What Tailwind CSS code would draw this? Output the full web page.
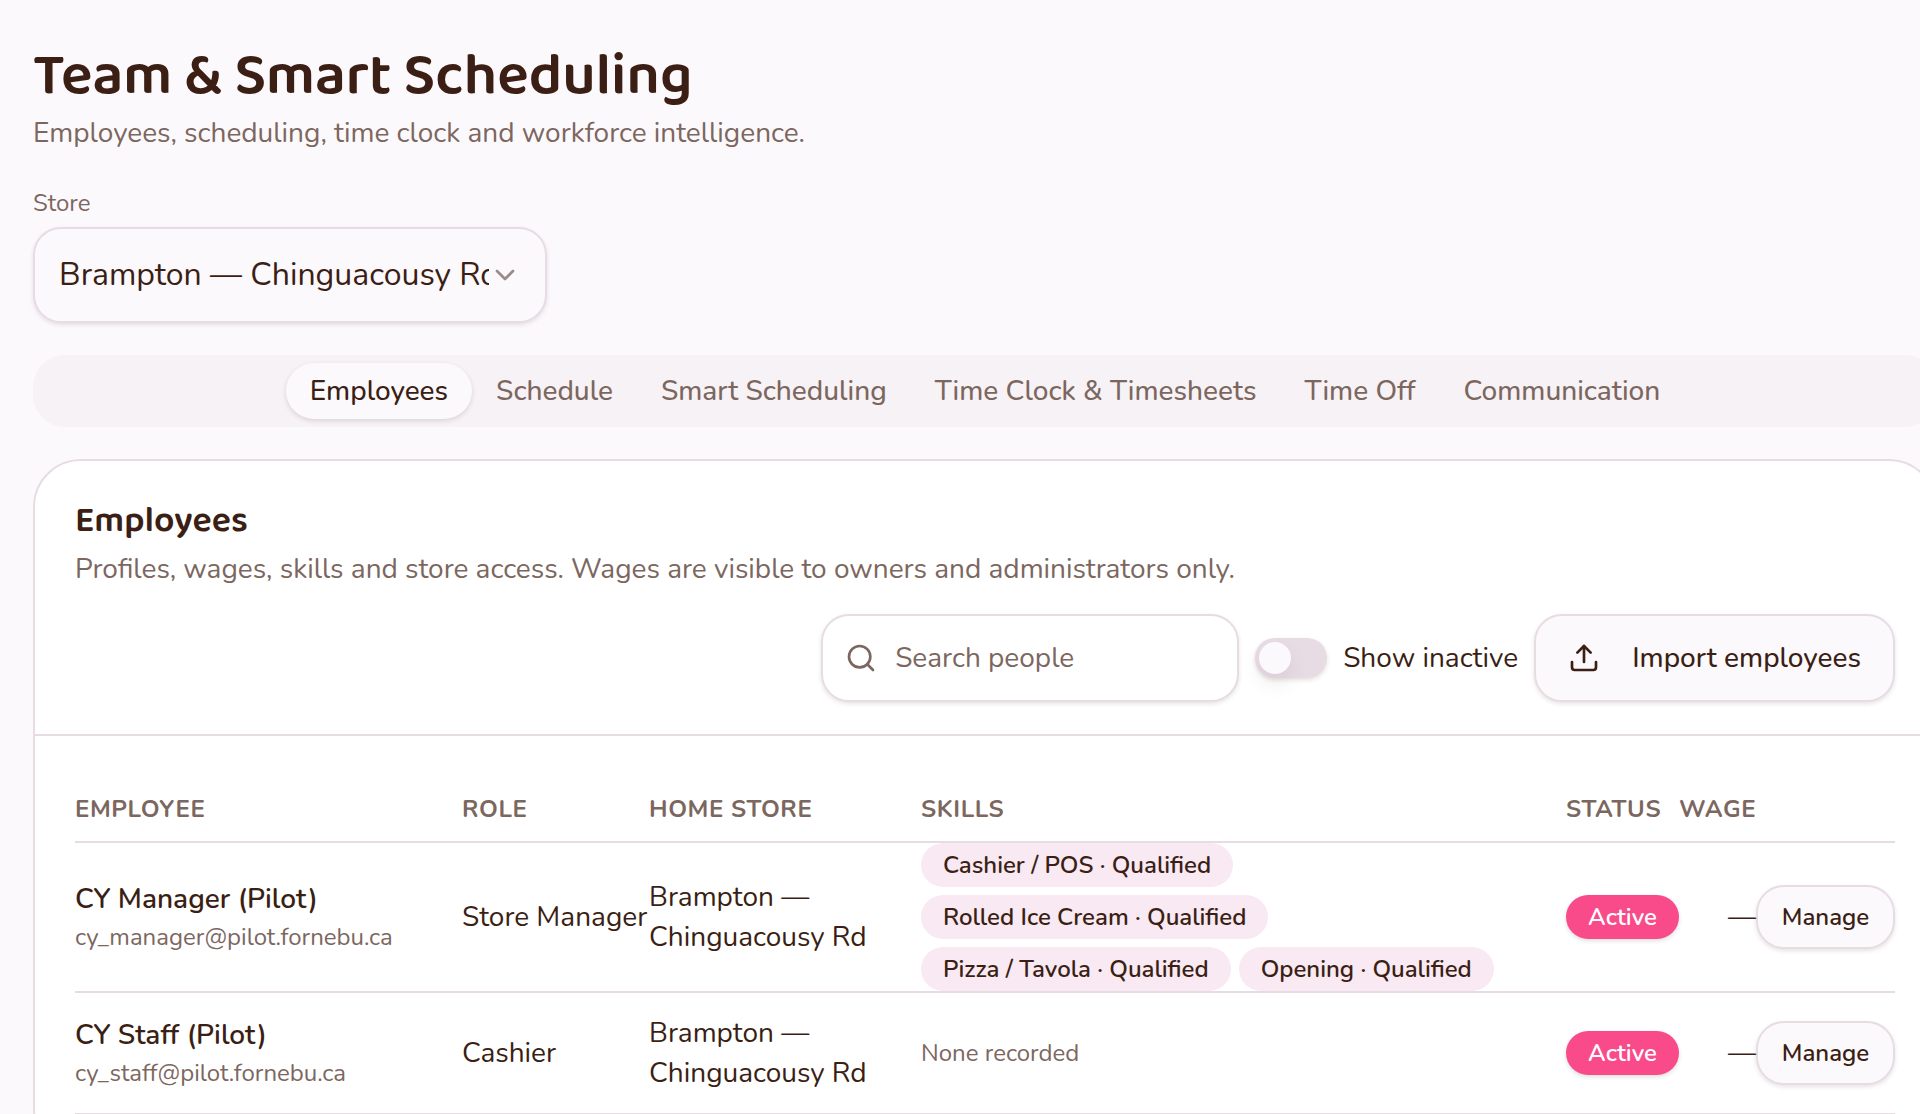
<!DOCTYPE html>
<html lang="en">
<head>
    <meta charset="UTF-8">
    <meta name="viewport" content="width=device-width, initial-scale=1.0">
    <title>Team &amp; Smart Scheduling</title>
    <script src="https://cdn.jsdelivr.net/npm/@tailwindcss/browser@4"></script>
</head>
<body class="overflow-x-hidden bg-[#fcf9fd] font-['Nunito','Open_Sans',sans-serif] text-[28px] leading-10 text-[#3b1f14] antialiased">
    <main class="-mr-[17px] ml-[33px] pt-[41px]">
        <header>
            <h1 class="font-['Baloo_2','Nunito',sans-serif] text-[59px] leading-[72px] font-semibold">Team &amp; Smart Scheduling</h1>
            <p class="text-[#7c675f]">Employees, scheduling, time clock and workforce intelligence.</p>
        </header>

        <!-- Store picker -->
        <div class="mt-[34px] flex flex-col items-start gap-2">
            <label for="store" class="text-2xl text-[#7c675f]">Store</label>
            <div class="relative">
                <select id="store" class="h-24 w-[514px] appearance-none rounded-[28px] border-2 border-[#e8dce4] bg-[#fcf9fd] pr-[56px] pl-6 text-[32px] leading-10 shadow-[0_2px_4px_rgba(59,31,20,0.12)]">
                    <option>Brampton — Chinguacousy Rd</option>
                </select>
                <svg class="pointer-events-none absolute top-8 right-[26px] size-8 opacity-50" viewBox="0 0 24 24" fill="none" stroke="currentColor" stroke-width="2" stroke-linecap="round" stroke-linejoin="round"><path d="m6 9 6 6 6-6"/></svg>
            </div>
        </div>

        <!-- Tabs -->
        <div role="tablist" class="mt-8 flex justify-center rounded-[32px] bg-[#f7f2f6] p-2 font-medium text-[#7c675f]">
            <button role="tab" aria-selected="true" class="rounded-[28px] bg-[#fcf9fd] px-6 py-2 text-[#3b1f14] shadow-[0_2px_5px_rgba(59,31,20,0.14)]">Employees</button>
            <button role="tab" class="px-6 py-2">Schedule</button>
            <button role="tab" class="px-6 py-2">Smart Scheduling</button>
            <button role="tab" class="px-6 py-2">Time Clock &amp; Timesheets</button>
            <button role="tab" class="px-6 py-2">Time Off</button>
            <button role="tab" class="px-6 py-2">Communication</button>
        </div>

        <!-- Employees card -->
        <section class="mt-8 rounded-[48px] border-2 border-[#e8dce4] bg-white">
            <div class="border-b-2 border-[#e8dce4] px-10 pt-10 pb-8">
                <h2 class="font-['Baloo_2','Nunito',sans-serif] text-4xl leading-10 font-semibold">Employees</h2>
                <p class="mt-2 text-[#7c675f]">Profiles, wages, skills and store access. Wages are visible to owners and administrators only.</p>
                <div class="mt-[25px] flex items-center justify-end gap-4">
                    <div class="relative">
                        <svg class="pointer-events-none absolute top-7 left-6 size-8 text-[#7c675f]" viewBox="0 0 24 24" fill="none" stroke="currentColor" stroke-width="2" stroke-linecap="round" stroke-linejoin="round"><circle cx="11" cy="11" r="8"/><path d="m21 21-4.3-4.3"/></svg>
                        <input type="search" aria-label="Search people" placeholder="Search people" class="h-22 w-[418px] rounded-[28px] border-2 border-[#e8dce4] bg-white pr-6 pl-18 shadow-[0_2px_4px_rgba(59,31,20,0.12)] placeholder:text-[#7c675f]">
                    </div>
                    <label class="flex items-center gap-4">
                        <input type="checkbox" role="switch" class="h-10 w-18 appearance-none rounded-full bg-[#e8dce4] p-1 shadow-[0_2px_4px_rgba(59,31,20,0.14)] before:block before:size-8 before:rounded-full before:bg-[#fcf9fd] before:shadow-[0_10px_20px_rgba(59,31,20,0.08)] checked:bg-[#f94b8a] checked:before:ml-8">
                        Show inactive
                    </label>
                    <button class="flex h-22 items-center gap-8 rounded-[28px] border-2 border-[#e8dce4] bg-[#fcf9fd] px-8 font-medium shadow-[0_2px_4px_rgba(59,31,20,0.12)]">
                        <svg class="size-8" viewBox="0 0 24 24" fill="none" stroke="currentColor" stroke-width="2" stroke-linecap="round" stroke-linejoin="round"><path d="M21 15v4a2 2 0 0 1-2 2H5a2 2 0 0 1-2-2v-4"/><path d="m17 8-5-5-5 5"/><path d="M12 3v12"/></svg>
                        Import employees
                    </button>
                </div>
            </div>

            <div class="p-10">
                <table class="w-full table-fixed border-separate border-spacing-0">
                    <colgroup>
                        <col class="w-[387px]">
                        <col class="w-[187px]">
                        <col class="w-[272px]">
                        <col>
                        <col class="w-[113px]">
                        <col class="w-[77px]">
                        <col class="w-[139px]">
                    </colgroup>
                    <thead>
                        <tr class="h-[67px] text-left text-2xl tracking-wide text-[#7c675f] uppercase *:border-b-2 *:border-[#e8dce4] *:p-0">
                            <th>Employee</th>
                            <th>Role</th>
                            <th>Home store</th>
                            <th>Skills</th>
                            <th>Status</th>
                            <th class="text-right">Wage</th>
                            <td></td>
                        </tr>
                    </thead>
                    <tbody>
                        <tr class="h-[122px] *:border-b-2 *:border-[#e8dce4]">
                            <td>
                                <p class="leading-9 font-semibold">CY Manager (Pilot)</p>
                                <p class="mt-1 text-2xl text-[#7c675f]">cy_manager@pilot.fornebu.ca</p>
                            </td>
                            <td class="whitespace-nowrap">Store Manager</td>
                            <td>Brampton — Chinguacousy Rd</td>
                            <td>
                                <div class="flex flex-wrap gap-2 text-2xl font-semibold">
                                    <span class="rounded-full bg-[#f8e9f3] px-[22px] py-[6px]">Cashier / POS · Qualified</span>
                                    <span class="rounded-full bg-[#f8e9f3] px-[22px] py-[6px]">Rolled Ice Cream · Qualified</span>
                                    <span class="rounded-full bg-[#f8e9f3] px-[22px] py-[6px]">Pizza / Tavola · Qualified</span>
                                    <span class="rounded-full bg-[#f8e9f3] px-[22px] py-[6px]">Opening · Qualified</span>
                                </div>
                            </td>
                            <td><div class="rounded-full bg-[#f94b8a] py-[6px] text-center text-2xl font-semibold text-white shadow-[0_2px_4px_rgba(59,31,20,0.14)]">Active</div></td>
                            <td class="text-right">—</td>
                            <td><button class="block h-16 w-full rounded-[28px] border-2 border-[#e8dce4] bg-[#fcf9fd] text-2xl font-semibold shadow-[0_2px_4px_rgba(59,31,20,0.12)]">Manage</button></td>
                        </tr>
                        <tr class="h-[122px] *:border-b-2 *:border-[#e8dce4]">
                            <td>
                                <p class="leading-9 font-semibold">CY Staff (Pilot)</p>
                                <p class="mt-1 text-2xl text-[#7c675f]">cy_staff@pilot.fornebu.ca</p>
                            </td>
                            <td class="whitespace-nowrap">Cashier</td>
                            <td>Brampton — Chinguacousy Rd</td>
                            <td class="text-2xl text-[#7c675f]">None recorded</td>
                            <td><div class="rounded-full bg-[#f94b8a] py-[6px] text-center text-2xl font-semibold text-white shadow-[0_2px_4px_rgba(59,31,20,0.14)]">Active</div></td>
                            <td class="text-right">—</td>
                            <td><button class="block h-16 w-full rounded-[28px] border-2 border-[#e8dce4] bg-[#fcf9fd] text-2xl font-semibold shadow-[0_2px_4px_rgba(59,31,20,0.12)]">Manage</button></td>
                        </tr>
                    </tbody>
                </table>
            </div>
        </section>
    </main>
</body>
</html>
